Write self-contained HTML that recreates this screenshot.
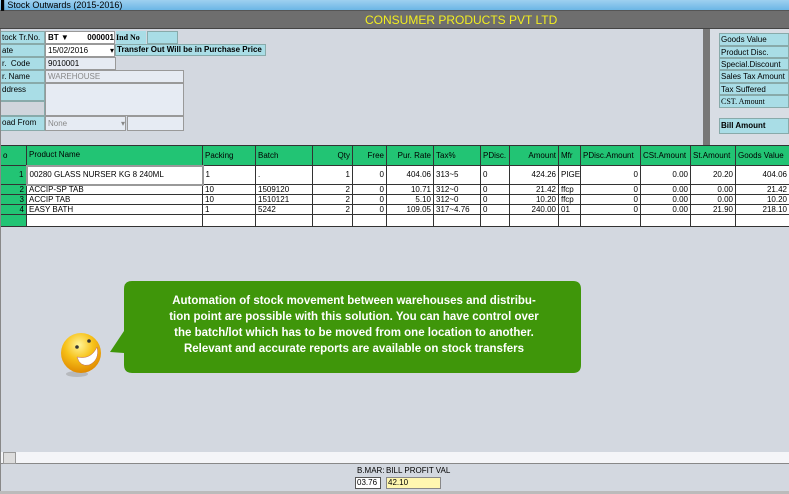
<!DOCTYPE html>
<html><head><style>
*{margin:0;padding:0;box-sizing:border-box}
body{width:789px;height:494px;overflow:hidden;background:#d3d8e0;font-family:"Liberation Sans",sans-serif;font-size:8px;position:relative;color:#000}
.a{position:absolute}
.lb{position:absolute;background:#a9dde6;border:1px solid #8aa;font-size:8px;padding-left:1px;line-height:11px;white-space:nowrap;overflow:hidden}
.in{position:absolute;background:#e6ebf3;border:1px solid #999;font-size:8px;padding-left:2px;line-height:11px;white-space:nowrap;overflow:hidden}
table{position:absolute;left:0;top:145px;border-collapse:collapse;font-size:8px;table-layout:fixed}
td{border:1px solid #333;padding:0 2px;white-space:nowrap;overflow:hidden;background:#fff;height:10px;line-height:8px}
tr.h td{background:#22c474;height:20px;border-color:#333}
td.n{background:#22c474;text-align:right}
.r{text-align:right}
</style></head><body>
<div class="a" style="left:0;top:0;width:789px;height:11px;background:linear-gradient(#9fd0f0,#6cb6e6);border-bottom:1px solid #555"></div>
<div class="a" style="left:1px;top:0;font-size:9px;line-height:11px">&#9612;Stock Outwards (2015-2016)</div>
<div class="a" style="left:0;top:11px;width:789px;height:18px;background:#6e6e6e;border-bottom:1px solid #444"></div>
<div class="a" style="left:365px;top:12px;color:#f2ee20;font-size:12px;line-height:16px">CONSUMER PRODUCTS PVT LTD</div>

<div class="lb" style="left:0;top:31px;width:45px;height:13px">tock Tr.No.</div>
<div class="in" style="left:45px;top:31px;width:70px;height:13px;background:#fff;font-weight:bold">BT &#9660; <span style="float:right">000001</span></div>
<div class="a" style="left:116px;top:31px;width:30px;height:13px;background:#a9dde6;font-weight:bold;line-height:13px;font-family:'Liberation Serif',serif">Ind No</div>
<div class="lb" style="left:147px;top:31px;width:31px;height:13px"></div>
<div class="lb" style="left:0;top:44px;width:45px;height:13px">ate</div>
<div class="in" style="left:45px;top:44px;width:70px;height:13px;background:#fff">15/02/2016 <span style="float:right">&#9662;</span></div>
<div class="lb" style="left:115px;top:44px;width:151px;height:12px;font-weight:bold;line-height:10px">Transfer Out Will be in Purchase Price</div>
<div class="lb" style="left:0;top:57px;width:45px;height:13px">r.&nbsp; Code</div>
<div class="in" style="left:45px;top:57px;width:71px;height:13px">9010001</div>
<div class="lb" style="left:0;top:70px;width:45px;height:13px">r. Name</div>
<div class="in" style="left:45px;top:70px;width:139px;height:13px;color:#888">WAREHOUSE</div>
<div class="lb" style="left:0;top:83px;width:45px;height:18px">ddress</div>
<div class="lb" style="left:0;top:101px;width:45px;height:15px;background:#d0d5dc"></div>
<div class="in" style="left:45px;top:83px;width:139px;height:33px"></div>
<div class="lb" style="left:0;top:116px;width:45px;height:15px">oad From</div>
<div class="in" style="left:45px;top:116px;width:81px;height:15px;color:#888;line-height:13px">None <span style="float:right">&#9662;</span></div>
<div class="in" style="left:127px;top:116px;width:57px;height:15px"></div>

<div class="a" style="left:703px;top:29px;width:7px;height:116px;background:#777"></div>
<div class="a" style="left:710px;top:29px;width:79px;height:116px;background:#d8dde4"></div>
<div class="lb" style="left:719px;top:33px;width:70px;height:13px">Goods Value</div>
<div class="lb" style="left:719px;top:46px;width:70px;height:12px">Product Disc.</div>
<div class="lb" style="left:719px;top:58px;width:70px;height:12px">Special.Discount</div>
<div class="lb" style="left:719px;top:70px;width:70px;height:13px">Sales Tax Amount</div>
<div class="lb" style="left:719px;top:83px;width:70px;height:12px">Tax Suffered</div>
<div class="lb" style="left:719px;top:95px;width:70px;height:13px;font-family:'Liberation Serif',serif">CST. Amount</div>
<div class="lb" style="left:719px;top:118px;width:70px;height:16px;font-weight:bold;line-height:14px">Bill Amount</div>

<table style="width:789px">
<colgroup><col style="width:26px"><col style="width:176px"><col style="width:53px"><col style="width:57px"><col style="width:40px"><col style="width:34px"><col style="width:47px"><col style="width:47px"><col style="width:29px"><col style="width:49px"><col style="width:22px"><col style="width:60px"><col style="width:50px"><col style="width:45px"><col style="width:54px"></colgroup>
<tr class="h"><td>o</td><td>Product Name</td><td>Packing</td><td>Batch</td><td class="r">Qty</td><td class="r">Free</td><td class="r">Pur. Rate</td><td>Tax%</td><td>PDisc.</td><td class="r">Amount</td><td>Mfr</td><td>PDisc.Amount</td><td>CSt.Amount</td><td>St.Amount</td><td>Goods Value</td></tr>
<tr style="height:19px"><td class="n">1</td><td style="border:2px solid #999">00280 GLASS NURSER KG 8 240ML</td><td>1</td><td>.</td><td class="r">1</td><td class="r">0</td><td class="r">404.06</td><td>313~5</td><td>0</td><td class="r">424.26</td><td>PIGE</td><td class="r">0</td><td class="r">0.00</td><td class="r">20.20</td><td class="r">404.06</td></tr>
<tr><td class="n">2</td><td>ACCIP-SP TAB</td><td>10</td><td>1509120</td><td class="r">2</td><td class="r">0</td><td class="r">10.71</td><td>312~0</td><td>0</td><td class="r">21.42</td><td>ffcp</td><td class="r">0</td><td class="r">0.00</td><td class="r">0.00</td><td class="r">21.42</td></tr>
<tr><td class="n">3</td><td>ACCIP TAB</td><td>10</td><td>1510121</td><td class="r">2</td><td class="r">0</td><td class="r">5.10</td><td>312~0</td><td>0</td><td class="r">10.20</td><td>ffcp</td><td class="r">0</td><td class="r">0.00</td><td class="r">0.00</td><td class="r">10.20</td></tr>
<tr><td class="n">4</td><td>EASY BATH</td><td>1</td><td>5242</td><td class="r">2</td><td class="r">0</td><td class="r">109.05</td><td>317~4.76</td><td>0</td><td class="r">240.00</td><td>01</td><td class="r">0</td><td class="r">0.00</td><td class="r">21.90</td><td class="r">218.10</td></tr>
<tr style="height:12px"><td class="n"></td><td></td><td></td><td></td><td></td><td></td><td></td><td></td><td></td><td></td><td></td><td></td><td></td><td></td><td></td></tr>
</table>

<svg class="a" style="left:55px;top:330px" width="50" height="50" viewBox="0 0 50 50">
<defs><radialGradient id="g" cx="0.45" cy="0.3" r="0.7"><stop offset="0" stop-color="#fff59a"/><stop offset="0.5" stop-color="#f7c21a"/><stop offset="1" stop-color="#e08a00"/></radialGradient></defs>
<ellipse cx="22" cy="44" rx="11" ry="3" fill="#999" opacity="0.5"/>
<circle cx="26" cy="23" r="20" fill="url(#g)"/>
<circle cx="22" cy="17" r="1.8" fill="#333"/><circle cx="34" cy="11" r="1.8" fill="#333"/>
<path d="M22 27 Q36 30 42 17 Q45 30 34 35 Q25 37 22 27Z" fill="#fff" stroke="#b66" stroke-width="0.5"/>
</svg>
<svg class="a" style="left:105px;top:281px" width="476" height="92"><path d="M19 14 L19 8 Q19 0 27 0 L468 0 Q476 0 476 8 L476 84 Q476 92 468 92 L27 92 Q19 92 19 84 L19 72 L5 71 L19 50 Z" fill="#3f960a"/></svg>
<div class="a" style="left:132px;top:293px;width:444px;text-align:center;color:#fff;font-weight:bold;font-size:11.5px;line-height:16px">Automation of stock movement between warehouses and distribu-<br>tion point are possible with this solution. You can have control over<br>the batch/lot which has to be moved from one location to another.<br>Relevant and accurate reports are available on stock transfers</div>

<div class="a" style="left:0;top:452px;width:789px;height:12px;background:#f4f5f8;border-bottom:1px solid #888"></div>
<div class="a" style="left:3px;top:452px;width:13px;height:12px;background:#ddd;border:1px solid #999"></div>
<div class="a" style="left:0;top:29px;width:1px;height:465px;background:#888"></div>
<div class="a" style="left:357px;top:466px;font-size:8px">B.MAR:</div>
<div class="a" style="left:386px;top:466px;font-size:8px">BILL PROFIT VAL</div>
<div class="a" style="left:355px;top:477px;width:26px;height:12px;background:#fff;border:1px solid #555;font-size:8px;padding-left:1px;line-height:10px">03.76</div>
<div class="a" style="left:386px;top:477px;width:55px;height:12px;background:#fff7b0;border:1px solid #888;font-size:8px;padding-left:1px;line-height:10px">42.10</div>
<div class="a" style="left:0;top:491px;width:789px;height:3px;background:#bbb"></div>
</body></html>
